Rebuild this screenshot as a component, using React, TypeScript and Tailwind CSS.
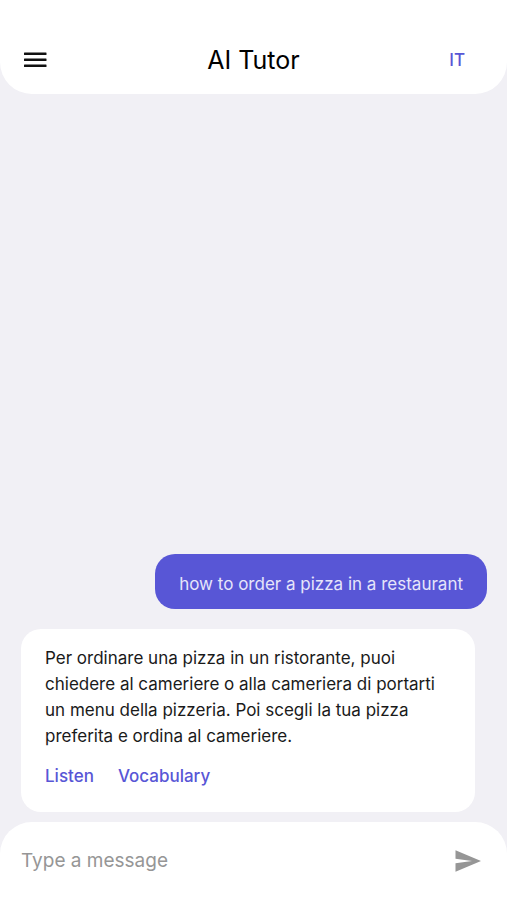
import { useState } from "react";

export default function App() {
  const [message, setMessage] = useState("");

  return (
    <div className="flex min-h-screen flex-col bg-[#f1f0f5] font-['Inter','Liberation_Sans',sans-serif] text-[#1a1a1a]">
      <header className="grid grid-cols-[1fr_auto_1fr] items-center rounded-b-[32px] bg-white px-6 pt-[42px] pb-4">
        <button type="button" aria-label="Open menu" className="flex h-9 w-9 items-center">
          <svg width="23" height="16" viewBox="0 0 23 16" fill="#111111" aria-hidden="true">
            <rect y="0.5" width="22.500" height="2.500" rx="0.5" />
            <rect y="6.5" width="22.500" height="2.500" rx="0.5" />
            <rect y="12.500" width="22.500" height="2.500" rx="0.5" />
          </svg>
        </button>
        <h1 className="text-[25px] leading-9 text-black">AI Tutor</h1>
        <button type="button" className="justify-self-end px-[18px] text-[17px] leading-6 font-medium text-[#5856d6]">
          IT
        </button>
      </header>

      <main className="flex flex-1 flex-col justify-end gap-5 pr-5 pb-[10px] pl-[21px]">
        <p className="self-end rounded-[20px] bg-[#5856d6] px-6 pt-[18px] pb-[13px] text-[17px] leading-6 text-[#e6e5fa]">
          how to order a pizza in a restaurant
        </p>
        <article className="mr-3 rounded-[20px] bg-white px-6 pt-4 pb-6">
          <p className="text-[17px] leading-[26px]">
            Per ordinare una pizza in un ristorante, puoi chiedere al cameriere o alla cameriera di portarti un menu della pizzeria. Poi scegli la tua pizza preferita e ordina al cameriere.
          </p>
          <div className="mt-[15px] flex gap-6 text-[17px] leading-6 font-medium text-[#5856d6]">
            <button type="button">Listen</button>
            <button type="button">Vocabulary</button>
          </div>
        </article>
      </main>

      <form className="flex h-[78px] items-center rounded-t-[32px] bg-white pr-5 pl-[21px]" onSubmit={(e) => e.preventDefault()}>
        <input
          type="text"
          aria-label="Message"
          placeholder="Type a message"
          value={message}
          onChange={(e) => setMessage(e.target.value)}
          className="min-w-0 flex-1 text-[19px] leading-7 outline-none placeholder:text-[#969696]"
        />
        <button type="submit" aria-label="Send message" className="px-[6px]">
          <svg width="26" height="22" viewBox="0 0 26 22" fill="#969696" aria-hidden="true">
            <path d="M0.5 0.3L26 11L0.5 21.700V13.300L17 11L0.5 8.700Z" />
          </svg>
        </button>
      </form>
    </div>
  );
}
